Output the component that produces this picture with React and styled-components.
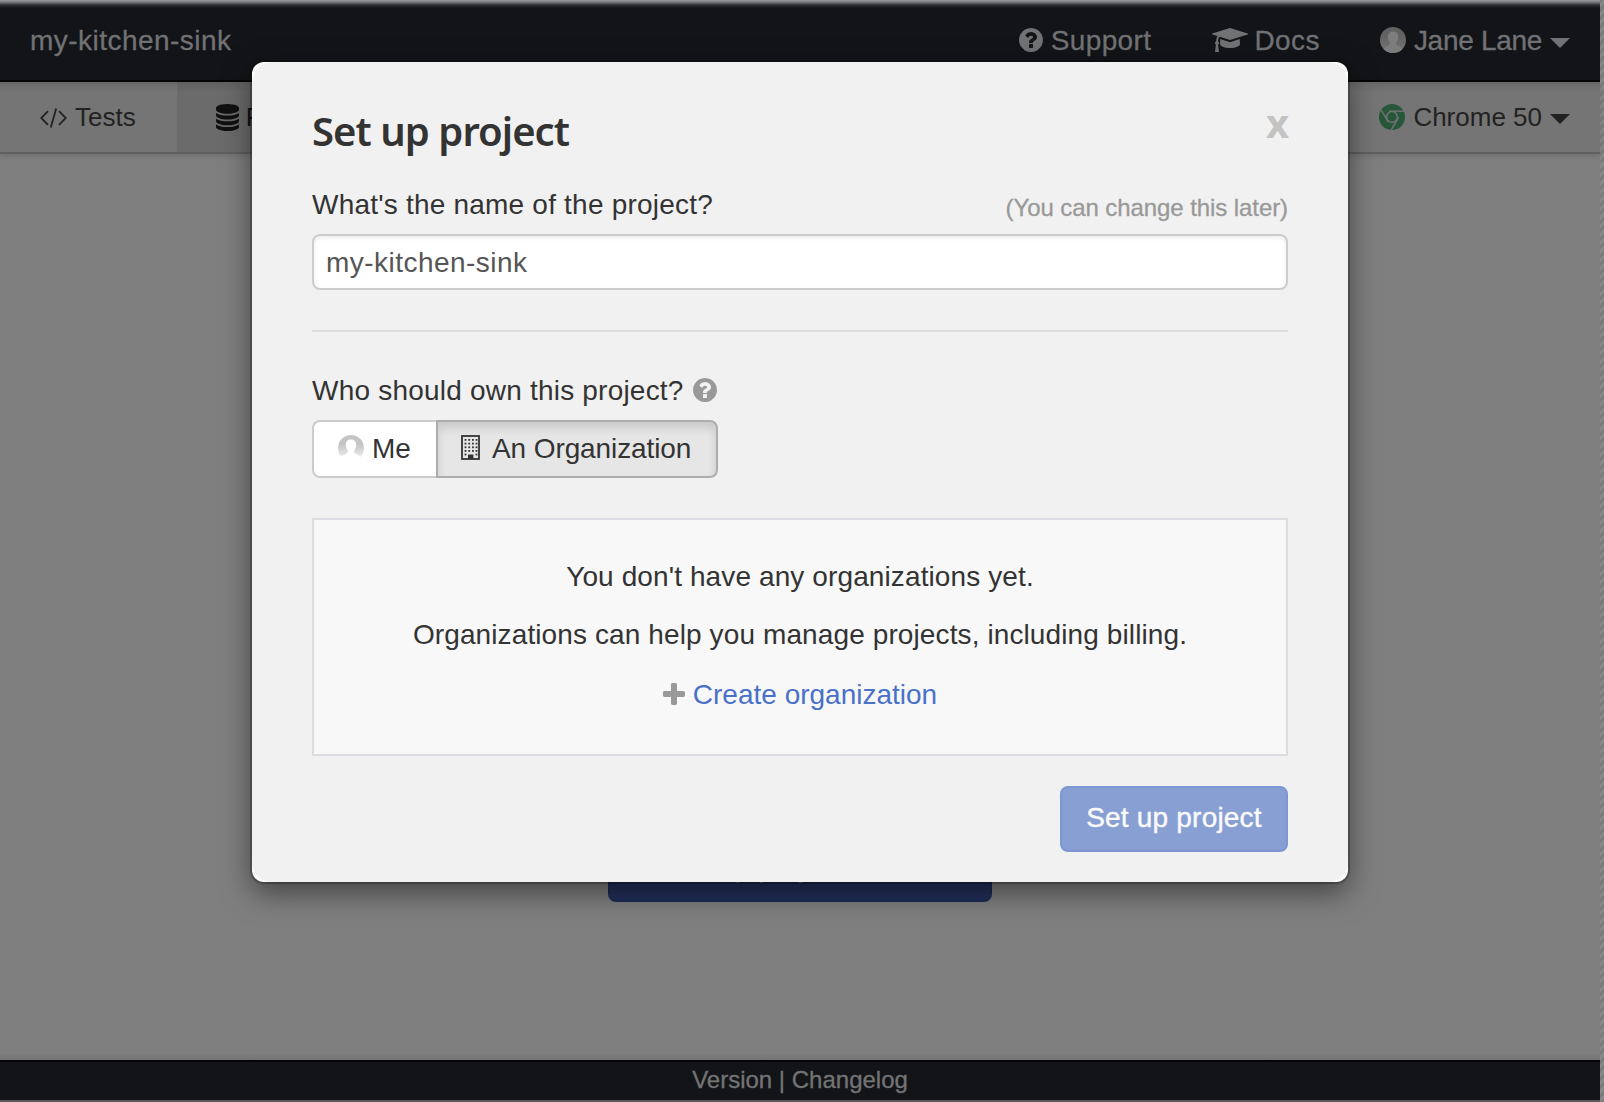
import React from 'react';
import styled, { createGlobalStyle, css } from 'styled-components';

const Global = createGlobalStyle`
  * { box-sizing: border-box; }
  body {
    margin: 0;
    overflow: hidden;
    font: 28px/40px "Liberation Sans", Arial, sans-serif;
    color: #333;
  }
`;

const Page = styled.div`
  position: relative;
  width: 1604px;
  height: 1102px;
  padding: 0 4px 2px 0;
  background: repeating-linear-gradient(135deg, #888 0 3px, #7b7b7b 3px 6px);
`;

const Shell = styled.div`
  display: flex;
  flex-direction: column;
  width: 1600px;
  height: 1102px;
  background: #7f7f7f;
  border-bottom: 2px solid #5b595b;
`;

const Bar = styled.header`
  display: flex;
  justify-content: space-between;
  height: 82px;
  padding: 0 30px;
  background: linear-gradient(#97999b 0, #7b7d7f 2px, #303134 5px, #131418 8px);
  border-bottom: 2px solid #050506;
  color: #717274;
  -webkit-text-stroke: 0.3px #717274;
`;

const Group = styled.div`
  display: flex;
  align-items: center;
  gap: ${(p) => p.$gap || 0}px;
`;

const Item = styled.span`
  display: flex;
  align-items: center;
  gap: ${(p) => p.$gap || 8}px;
  padding-top: 2px;
  white-space: nowrap;
  letter-spacing: ${(p) => p.$track || 0}px;
`;

const Nav = styled.nav`
  display: flex;
  height: 72px;
  background: linear-gradient(#686868, #757575 10px);
  border-bottom: 2px solid #5f5f5f;
  box-shadow: 0 2px 6px rgba(0, 0, 0, 0.12);
  color: #222;
  font-size: 26px;
`;

const Tab = styled.div`
  display: flex;
  align-items: center;
  gap: ${(p) => p.$gap || 8}px;
  padding: 0 ${(p) => p.$end || 40}px 0 ${(p) => p.$start || 40}px;
  margin-left: ${(p) => (p.$right ? 'auto' : 0)};
  white-space: nowrap;
  ${(p) =>
    p.$active &&
    css`
      background: linear-gradient(#606060, #6b6b6b 10px);
      color: #111;
    `}
`;

const Main = styled.main`
  flex: 1;
  display: flex;
  flex-direction: column;
  align-items: center;
  justify-content: flex-end;
  padding-bottom: 158px;
  background: linear-gradient(to top, #747474, transparent 6px);
`;

const PageButton = styled.button`
  width: 384px;
  height: 66px;
  padding: 0 0 2px 58px;
  background: #22315a;
  border: 2px solid #1d2c56;
  border-radius: 8px;
  color: #777;
  font: inherit;
  letter-spacing: 0.2px;
  text-align: left;
  white-space: nowrap;
`;

const Footer = styled.footer`
  display: flex;
  justify-content: center;
  height: 40px;
  background: #131418;
  border-top: 2px solid #050506;
  color: #737475;
  font-size: 24px;
  line-height: 35px;
  -webkit-text-stroke: 0.3px #737475;
`;

const Overlay = styled.div`
  position: absolute;
  inset: 0 4px 0 0;
  display: flex;
  justify-content: center;
  align-items: flex-start;
  padding-top: 62px;
`;

const Dialog = styled.section`
  width: 1096px;
  height: 820px;
  background: #fff;
  border-radius: 12px;
  box-shadow: 0 0 0 2px rgba(0, 0, 0, 0.22), 0 10px 30px rgba(0, 0, 0, 0.5);
`;

const DialogBody = styled.div`
  display: flex;
  flex-direction: column;
  height: 100%;
  padding: 40px 60px 30px;
  background: #f1f1f1;
  border-radius: 20px;
`;

const Row = styled.div`
  display: flex;
  justify-content: space-between;
  height: ${(p) => p.$height}px;
`;

const Title = styled.h1`
  margin: 0;
  font: 600 40px/58px "Noto Sans", sans-serif;
  letter-spacing: -0.95px;
`;

const Close = styled.button`
  align-self: flex-start;
  margin: 1px -1px 0 0;
  padding: 0;
  border: 0;
  background: none;
  color: #c3c3c3;
  font: 700 40px/40px "Noto Sans", sans-serif;
`;

const Label = styled.label`
  display: flex;
  align-items: center;
  gap: 9px;
  height: 40px;
  padding-top: 2px;
  white-space: nowrap;
  letter-spacing: 0.21px;
`;

const Hint = styled.span`
  color: #999;
  font-size: 24px;
  line-height: 47px;
  letter-spacing: -0.08px;
  -webkit-text-stroke: 0.3px #999;
`;

const Input = styled.input`
  width: 100%;
  height: 56px;
  margin-top: 10px;
  padding: 2px 12px 0;
  border: 2px solid #ccc;
  border-radius: 8px;
  box-shadow: inset 0 2px 4px rgba(0, 0, 0, 0.075);
  background: #fff;
  color: #555;
  font: inherit;
  letter-spacing: 0.47px;
  outline: none;
`;

const Divider = styled.hr`
  flex: none;
  width: 100%;
  height: 2px;
  margin: 40px 0 38px;
  border: 0;
  background: #dcdcdc;
`;

const Choices = styled.div`
  display: flex;
  margin-top: 10px;
`;

const Choice = styled.button`
  display: flex;
  align-items: center;
  gap: ${(p) => p.$gap}px;
  width: ${(p) => p.$width}px;
  height: 58px;
  padding: 0 0 0 24px;
  border: 2px solid #ccc;
  border-right-width: 0;
  border-radius: 8px 0 0 8px;
  background: #fff;
  color: #333;
  font: inherit;
  white-space: nowrap;
  ${(p) =>
    p.$active &&
    css`
      padding-left: 23px;
      border: 2px solid #adadad;
      border-radius: 0 8px 8px 0;
      background: #e6e6e6;
      box-shadow: inset 0 6px 10px rgba(0, 0, 0, 0.125);
      letter-spacing: -0.1px;
    `}
`;

const Empty = styled.div`
  display: flex;
  flex-direction: column;
  align-items: center;
  height: 238px;
  margin-top: 40px;
  padding-top: 37px;
  border: 2px solid #dcdce3;
  background: #f8f8f8;
`;

const Line = styled.p`
  margin: 0 0 18px;
  white-space: nowrap;
  letter-spacing: 0.11px;
`;

const CreateLink = styled.a`
  display: flex;
  align-items: center;
  gap: 8px;
  margin-top: 2px;
  color: #4a71c9;
`;

const Submit = styled.button`
  align-self: flex-end;
  width: 228px;
  height: 66px;
  margin-top: 30px;
  padding: 0 0 2px;
  border: 2px solid #7e97d2;
  border-radius: 8px;
  background: #889fd4;
  color: #fafafa;
  font: inherit;
  letter-spacing: 0.2px;
  -webkit-text-stroke: 0.4px #fafafa;
`;

const Glyph = styled.svg`
  display: block;
  flex: none;
  margin-top: ${(p) => p.$drop || 0}px;
  fill: ${(p) => p.$color || 'currentColor'};
`;

const Question = ({ color, drop = -2 }) => (
  <Glyph width="24" height="24" viewBox="128 128 1536 1536" $color={color} $drop={drop}>
    <path d="M1024 1376v-192q0-14-9-23t-23-9h-192q-14 0-23 9t-9 23v192q0 14 9 23t23 9h192q14 0 23-9t9-23zm256-672q0-88-55.5-163t-138.5-116-170-41q-243 0-371 213-15 24 8 42l132 100q7 6 19 6 16 0 25-12 53-68 86-92 34-24 86-24 48 0 85.5 26t37.5 59q0 38-20 61t-68 45q-63 28-115.5 86.5t-52.5 125.5v36q0 14 9 23t23 9h192q14 0 23-9t9-23q0-19 21.5-49.5t54.5-49.5q32-18 49-28.5t46-35 44.5-48 28-60.5 12.5-81zm384 192q0 209-103 385.5t-279.5 279.5-385.5 103-385.5-103-279.5-279.5-103-385.5 103-385.5 279.5-279.5 385.5-103 385.5 103 279.5 279.5 103 385.5z" />
  </Glyph>
);

const Cap = () => (
  <Glyph width="36" height="28" viewBox="0 0 2304 1792" $drop={-2}>
    <path d="M1774 836l18 316q4 69-82 128t-235 93.5-323 34.5-323-34.5-235-93.5-82-128l18-316 574 181q22 7 48 7t48-7zm530-324q0 23-22 31l-1120 352q-4 1-10 1t-10-1l-652-206q-43 34-71 111.5t-34 178.5q63 36 63 109 0 69-58 107l58 433q2 14-8 25-9 11-24 11h-192q-15 0-24-11-10-11-8-25l58-433q-58-38-58-107 0-73 65-111 11-207 98-330l-333-104q-22-8-22-31t22-31l1120-352q4-1 10-1t10 1l1120 352q22 8 22 31z" />
  </Glyph>
);

const Database = () => (
  <Glyph width="23" height="27" viewBox="128 0 1536 1792">
    <path d="M896 768q237 0 443-43t325-127v170q0 69-103 128t-280 93.5-385 34.5-385-34.5-280-93.5-103-128v-170q119 84 325 127t443 43zm0 768q237 0 443-43t325-127v170q0 69-103 128t-280 93.5-385 34.5-385-34.5-280-93.5-103-128v-170q119 84 325 127t443 43zm0-384q237 0 443-43t325-127v170q0 69-103 128t-280 93.5-385 34.5-385-34.5-280-93.5-103-128v-170q119 84 325 127t443 43zm0-1152q208 0 385 34.5t280 93.5 103 128v128q0 69-103 128t-280 93.5-385 34.5-385-34.5-280-93.5-103-128v-128q0-69 103-128t280-93.5 385-34.5z" />
  </Glyph>
);

const Plus = () => (
  <Glyph width="22" height="22" viewBox="192 128 1408 1408" $color="#999" $drop={-2}>
    <path d="M1600 736v192q0 40-28 68t-68 28h-416v416q0 40-28 68t-68 28h-192q-40 0-68-28t-28-68v-416h-416q-40 0-68-28t-28-68v-192q0-40 28-68t68-28h416v-416q0-40 28-68t68-28h192q40 0 68 28t28 68v416h416q40 0 68 28t28 68z" />
  </Glyph>
);

const Caret = () => (
  <Glyph width="20" height="10" viewBox="0 0 20 10" $drop={4}>
    <path d="M0 0h20L10 10z" />
  </Glyph>
);

const Code = () => (
  <Glyph width="27" height="20" viewBox="0 0 27 20" $drop={1}>
    <path d="M8 3.2L1.2 10L8 16.8M19 3.2L25.8 10L19 16.8M16.2 0.5L10.8 19.5" fill="none" stroke="currentColor" strokeWidth="1.8" />
  </Glyph>
);

const SPOKES = [0, 120, 240];

const Chrome = () => (
  <Glyph width="26" height="26" viewBox="0 0 26 26" $color="#27573a">
    <circle cx="13" cy="13" r="13" />
    <g fill="none" stroke="#727272" strokeWidth="1.5">
      <circle cx="13" cy="13" r="5.400" />
      {SPOKES.map((angle) => (
        <path key={angle} d="M10 7.200H25" transform={'rotate(' + angle + ' 13 13)'} />
      ))}
    </g>
  </Glyph>
);

const WINDOW_COLS = [4, 7.7, 11.4, 15];
const WINDOW_ROWS = [4, 7.7, 11.4, 15, 18.6];

const Building = () => (
  <Glyph width="20" height="25" viewBox="0 0 20 25" $drop={-3}>
    <rect x="1" y="1" width="17" height="23" fill="none" stroke="currentColor" strokeWidth="1.8" />
    {WINDOW_ROWS.map((y, i) =>
      WINDOW_COLS.map((x, j) =>
        i === 4 && (j === 1 || j === 2) ? null : <rect key={x + '-' + y} x={x - 0.4} y={y} width="1.8" height="1.8" />
      )
    )}
    <rect x="7" y="19.5" width="5.4" height="4.5" />
  </Glyph>
);

const Avatar = ({ id, back, front, fade, drop }) => (
  <Glyph width="26" height="26" viewBox="0 0 26 26" $drop={drop}>
    <defs>
      <clipPath id={id}>
        <circle cx="13" cy="13" r="13" />
      </clipPath>
      <linearGradient id={id + '-bg'} x1="0" y1="0" x2="0" y2="1">
        <stop offset="0.35" stopColor={back} />
        <stop offset="1" stopColor={fade} />
      </linearGradient>
    </defs>
    <g clipPath={'url(#' + id + ')'}>
      <rect width="26" height="26" fill={'url(#' + id + '-bg)'} />
      <path d="M13 4.5c3.6 0 5.5 2.4 5.2 6-.2 2.7-1.2 4-2 5.3v1.8c1 1.8 5.5 1.8 7 5.4v4H2.800v-4c1.5-3.600 6-3.600 7-5.400v-1.800c-.8-1.300-1.800-2.600-2-5.300-.3-3.600 1.600-6 5.200-6z" fill={front} />
    </g>
  </Glyph>
);

export default function App() {
  return (
    <Page>
      <Global />
      <Shell>
        <Bar>
          <Group>
            <Item $track={0.47}>my-kitchen-sink</Item>
          </Group>
          <Group $gap={60}>
            <Item $track={0.4}><Question />Support</Item>
            <Item $gap={7} $track={0.4}><Cap />Docs</Item>
            <Item $track={-0.3}>
              <Avatar id="user" back="#626262" front="#7d7d7d" fade="#777" drop={-2} />
              Jane Lane
              <Caret />
            </Item>
          </Group>
        </Bar>
        <Nav>
          <Tab $end={41}><Code />Tests</Tab>
          <Tab $active $start={39} $gap={7}><Database />Runs</Tab>
          <Tab $right $end={30}>
            <Chrome />
            Chrome 50
            <Caret />
          </Tab>
        </Nav>
        <Main>
          <PageButton>Set up project to record</PageButton>
        </Main>
        <Footer>Version | Changelog</Footer>
      </Shell>
      <Overlay>
        <Dialog>
          <DialogBody>
            <Row $height={82}>
              <Title>Set up project</Title>
              <Close>x</Close>
            </Row>
            <Row $height={40}>
              <Label>What's the name of the project?</Label>
              <Hint>(You can change this later)</Hint>
            </Row>
            <Input defaultValue="my-kitchen-sink" />
            <Divider />
            <Label>Who should own this project?<Question color="#999" /></Label>
            <Choices>
              <Choice $width={124} $gap={8}>
                <Avatar id="me" back="#c4c4c4" front="#fff" fade="#f6f6f6" drop={-3} />
                Me
              </Choice>
              <Choice $active $width={282} $gap={11}>
                <Building />
                An Organization
              </Choice>
            </Choices>
            <Empty>
              <Line>You don't have any organizations yet.</Line>
              <Line>Organizations can help you manage projects, including billing.</Line>
              <CreateLink><Plus />Create organization</CreateLink>
            </Empty>
            <Submit>Set up project</Submit>
          </DialogBody>
        </Dialog>
      </Overlay>
    </Page>
  );
}
